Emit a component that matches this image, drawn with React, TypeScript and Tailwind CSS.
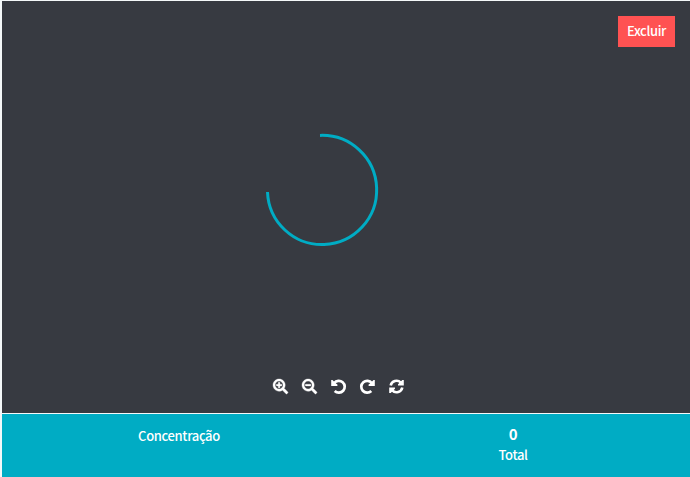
import { FaSearchPlus, FaSearchMinus } from "react-icons/fa";

function Undo({ className }: { className: string }) {
  return (
    <svg className={className} viewBox="0 0 15 15" fill="none">
      <path d="M3.2 4.1A5.9 5.9 0 1 1 3.7 12" stroke="currentColor" strokeWidth="2.7" />
      <path d="M.2 1V7H6.4V5.4L4.6 4.2 1.5 1Z" fill="currentColor" />
    </svg>
  );
}

function Refresh({ className }: { className: string }) {
  return (
    <svg className={className} viewBox="0 0 15 15" fill="currentColor">
      <path d="M1.7 6.5A5.9 5.9 0 0 1 11.8 3.6M13.3 8.5A5.9 5.9 0 0 1 3.2 11.4" fill="none" stroke="currentColor" strokeWidth="2.6" />
      <path d="M14.8.9V6.5H9V5.2L13.3.9ZM.2 14.1V8.5H6V9.8L1.7 14.1Z" />
    </svg>
  );
}

export default function App() {
  return (
    <main className="flex h-[477px] w-[690px] flex-col bg-[#f4f8f9] pl-[2px] pt-px font-['Noto_Sans_CJK_SC',sans-serif] text-[13px] font-medium leading-5 tracking-[-0.35px] text-white">
      <section className="flex h-[412px] flex-col bg-[#373a41]">
        <div className="flex h-[132px] justify-end pr-[15px] pt-[15px]">
          <button className="flex h-[31px] w-[57px] items-center justify-center bg-[#ff5252] pb-px">Excluir</button>
        </div>
        <svg className="ml-[264px] h-[114px] w-[114px]" viewBox="0 0 114 114" fill="none">
          <path d="M54 2.4A54.6 54.6 0 1 1 1.5 59" stroke="#00acc4" strokeWidth="3" />
        </svg>
        <div className="ml-[271px] mt-[132px] flex gap-[14px]">
          <FaSearchPlus className="size-[15px] overflow-visible stroke-white [stroke-width:12]" />
          <FaSearchMinus className="size-[15px] overflow-visible stroke-white [stroke-width:12]" />
          <Undo className="size-[15px] overflow-visible" />
          <Undo className="size-[15px] -scale-x-100 overflow-visible" />
          <Refresh className="size-[15px]" />
        </div>
      </section>
      <footer className="mt-px grid h-[63px] grid-cols-2 bg-[#00acc4] text-center">
        <div className="pl-[10px] pt-[12px]">Concentração</div>
        <div className="pr-[10px] pt-[10px]">
          <div className="text-[15px] font-bold">0</div>
          <div className="pt-px">Total</div>
        </div>
      </footer>
    </main>
  );
}
